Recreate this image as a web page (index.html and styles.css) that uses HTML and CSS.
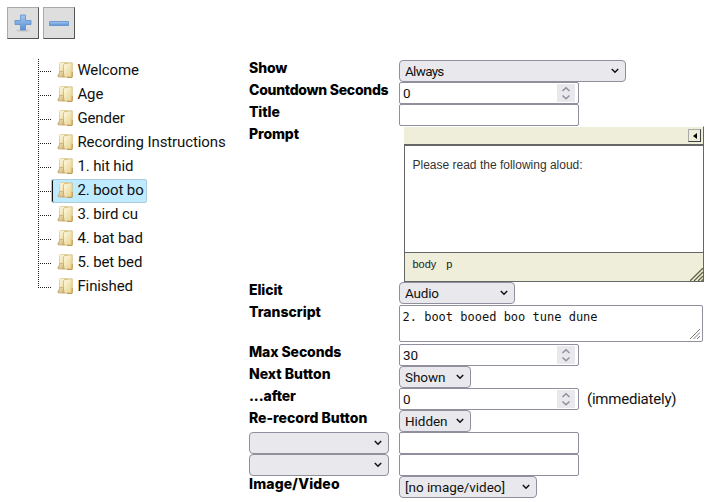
FILE: index.html
```html
<!DOCTYPE html>
<html lang="en">
<head>
<meta charset="utf-8">
<title>Task steps</title>
<link rel="stylesheet" href="styles.css">
</head>
<body>
<svg class="defs" aria-hidden="true">
  <defs>
    <linearGradient id="blue" x1="0" y1="0" x2="0" y2="1"><stop offset="0" stop-color="#a5c8ef"/><stop offset="1" stop-color="#5a90d6"/></linearGradient>
    <linearGradient id="gold" x1="0" y1="0" x2="1" y2="1"><stop offset="0" stop-color="#fffbe0"/><stop offset="1" stop-color="#e6d08c"/></linearGradient>
    <linearGradient id="tan" x1="0" y1="0" x2="1" y2="1"><stop offset="0" stop-color="#f5e8b8"/><stop offset="1" stop-color="#cfae6c"/></linearGradient>
  </defs>
  <symbol id="folder" viewBox="0 0 16 16">
    <path d="M0 14l2-3v4H1z" fill="#c6c6c6"/>
    <path d="M3.500.5h7v10h-8v-9z" fill="url(#gold)" stroke="#dcc794" stroke-width=".8"/>
    <path d="M7.500 1.500l7.700-.8v13.600l-1 .8H6.500v-12z" fill="url(#gold)" stroke="#d0b274" stroke-width=".8"/>
    <path d="M10 15.400h5.200V10" fill="none" stroke="#c09750"/>
    <path d="M2.700 9.500h3.500l1 5.500H1.600z" fill="url(#tan)" stroke="#c6a461" stroke-width=".7"/>
  </symbol>
  <symbol id="chevron" viewBox="0 0 8 6"><path d="M.8 1l3.200 3.200L7.200 1" fill="none" stroke="#111" stroke-width="1.500"/></symbol>
  <symbol id="spin" viewBox="0 0 18 18"><path d="M5.500 7L9 3.800 12.500 7M5.500 11.500L9 14.700l3.500-3.200" fill="none" stroke="#8f8f9d" stroke-width="1.500"/></symbol>
</svg>
<div class="toolbar">
  <button class="tool"><svg width="18" height="18" viewBox="0 0 18 18"><ellipse cx="9" cy="16.500" rx="7" ry="1.300" fill="#c9c9c9"/><path d="M6.500 1h5v5.500H17v4h-5.500V16h-5v-5.500H1v-4h5.500z" fill="url(#blue)" stroke="#5c8ecb" stroke-width=".8"/></svg></button>
  <button class="tool"><svg width="20" height="18" viewBox="0 0 20 18"><path d="M.5 7.500h19v4H.5z" fill="url(#blue)" stroke="#5c8ecb" stroke-width=".8"/></svg></button>
</div>
<main class="layout">
  <ul class="tree">
    <li><span class="node"><svg class="icon"><use href="#folder"/></svg><span class="name">Welcome</span></span></li>
    <li><span class="node"><svg class="icon"><use href="#folder"/></svg><span class="name">Age</span></span></li>
    <li><span class="node"><svg class="icon"><use href="#folder"/></svg><span class="name">Gender</span></span></li>
    <li><span class="node"><svg class="icon"><use href="#folder"/></svg><span class="name">Recording Instructions</span></span></li>
    <li><span class="node"><svg class="icon"><use href="#folder"/></svg><span class="name">1. hit hid</span></span></li>
    <li><span class="node selected"><svg class="icon"><use href="#folder"/></svg><span class="name">2. boot bo</span></span></li>
    <li><span class="node"><svg class="icon"><use href="#folder"/></svg><span class="name">3. bird cu</span></span></li>
    <li><span class="node"><svg class="icon"><use href="#folder"/></svg><span class="name">4. bat bad</span></span></li>
    <li><span class="node"><svg class="icon"><use href="#folder"/></svg><span class="name">5. bet bed</span></span></li>
    <li><span class="node"><svg class="icon"><use href="#folder"/></svg><span class="name">Finished</span></span></li>
  </ul>
  <div class="form">
    <div class="label">Show</div>
    <div class="select wide"><span>Always</span><svg class="chev"><use href="#chevron"/></svg></div>
    <div class="label long">Countdown Seconds</div>
    <div class="input"><span>0</span><svg class="spin"><use href="#spin"/></svg></div>
    <div class="label">Title</div>
    <div class="input"></div>
    <div class="label">Prompt</div>
    <div class="editor">
      <div class="editor-top"><span class="collapse"><svg width="4" height="6" viewBox="0 0 4 6"><path d="M4 0v6L0 3z"/></svg></span></div>
      <div class="editor-body">Please read the following aloud:</div>
      <div class="editor-path"><span>body</span><span>p</span><svg class="grip" width="13" height="13" viewBox="0 0 13 13"><path d="M0 13L13 0M4 13l9-9M8 13l5-5M11.500 13l1.500-1.500" stroke="#62623f" stroke-width="1.300"/></svg></div>
    </div>
    <div class="label">Elicit</div>
    <div class="select elicit"><span>Audio</span><svg class="chev"><use href="#chevron"/></svg></div>
    <div class="label wider">Transcript</div>
    <div class="textarea">2. boot booed boo tune dune<svg class="resize" width="10" height="10" viewBox="0 0 10 10"><path d="M0 10L10 0M3.500 10L10 3.500M7 10l3-3" stroke="#777" stroke-width="1"/></svg></div>
    <div class="label">Max Seconds</div>
    <div class="input"><span>30</span><svg class="spin"><use href="#spin"/></svg></div>
    <div class="label wider">Next Button</div>
    <div class="select small"><span>Shown</span><svg class="chev"><use href="#chevron"/></svg></div>
    <div class="label">...after</div>
    <div class="after"><div class="input"><span>0</span><svg class="spin"><use href="#spin"/></svg></div><span class="note">(immediately)</span></div>
    <div class="label wider">Re-record Button</div>
    <div class="select small"><span>Hidden</span><svg class="chev"><use href="#chevron"/></svg></div>
    <div class="select attribute"><span></span><svg class="chev"><use href="#chevron"/></svg></div>
    <div class="input"></div>
    <div class="select attribute"><span></span><svg class="chev"><use href="#chevron"/></svg></div>
    <div class="input"></div>
    <div class="label media-label">Image/Video</div>
    <div class="select media"><span>[no image/video]</span><svg class="chev"><use href="#chevron"/></svg></div>
  </div>
</main>
</body>
</html>
```
FILE: styles.css
```css
* { box-sizing: border-box; }
body { margin: 0; width: 711px; height: 502px; overflow: hidden; background: #fff; color: #111; font: 15px/22px Roboto, sans-serif; }
.defs { position: absolute; width: 0; height: 0; }
.toolbar { display: flex; gap: 4px; padding: 7px 0 0 7px; height: 58px; }
.tool { width: 32px; height: 32px; padding: 0; display: flex; align-items: center; justify-content: center; background: #dedede; border: 1px solid #aaa; border-right-color: #555; border-bottom: 1px solid #555; }
.layout { display: flex; }
.tree { list-style: none; margin: 1px 0 0 38px; padding: 0; width: 211px; height: 229px; background: repeating-linear-gradient(#222 0 1px, transparent 1px 2px) 0 0 / 1px 229px no-repeat; }
.tree li { height: 24px; display: flex; align-items: center; background: repeating-linear-gradient(90deg, #222 0 1px, transparent 1px 2px) 0 12px / 13px 1px no-repeat; }
.node { display: flex; align-items: center; height: 25px; margin: -1px 0 0 13px; padding: 0 4px 1px 5px; border: 1px solid transparent; }
.selected { background: #beebff; border-color: #a9cbda; border-radius: 2px; box-shadow: inset 1px 0 #111; padding-right: 2px; height: 24px; }
.icon { width: 16px; height: 16px; margin-right: 4.4px; }
.name { font-size: 15px; letter-spacing: -.1px; color: #111; }
.form { display: grid; grid-template-columns: 150px 312px; grid-template-rows: 22px 22px 22px 156px 22px 40px repeat(7, 22px); margin-top: 2px; }
.label { font: 800 14px/15px Inter, sans-serif; letter-spacing: -.1px; color: #000; white-space: nowrap; }
.long { letter-spacing: -.28px; }
.wider { letter-spacing: 0; }
.media-label { letter-spacing: .15px; }
.select { display: flex; align-items: center; justify-content: space-between; height: 22px; padding: 0 6px 0 5px; border: 1px solid #8f8f9d; border-radius: 4px; background: #e9e9ed; font-size: 13.5px; white-space: nowrap; }
.chev { width: 8px; height: 6px; }
.wide { width: 227px; letter-spacing: -.7px; }
.select.wide { letter-spacing: -.7px; }
.elicit { width: 116px; letter-spacing: -.2px; }
.small { width: 72px; letter-spacing: -.05px; }
.attribute { width: 140px; }
.media { width: 138px; letter-spacing: -.05px; }
.input { display: flex; align-items: center; justify-content: space-between; width: 180px; height: 22px; padding: 0 3px; border: 1px solid #8f8f9d; border-radius: 2px; background: #fff; font-size: 13.5px; }
.spin { width: 18px; height: 18px; background: #e9e9ed; }
.editor { display: flex; flex-direction: column; width: 300px; margin-left: 5px; height: 156px; font-family: "Liberation Sans", sans-serif; }
.editor-top { display: flex; align-items: center; justify-content: flex-end; height: 19px; padding-right: 2px; background: #eeeedb; border-top: 1px solid #fff; border-right: 1px solid #666; }
.collapse { width: 13px; height: 13px; margin-top: -1px; display: flex; align-items: center; justify-content: center; border: 1px solid #aaa; border-right-color: #444; border-bottom-color: #444; }
.editor-body { height: 109px; margin-top: -1px; padding: 8px 7.5px; border: 1px solid #666; border-top-width: 2px; font-size: 12px; color: #333; }
.editor-path { position: relative; flex: 1; display: flex; gap: 10px; padding: 0 7.5px; background: #eeeedb; border: 1px solid #666; border-top: 0; font-size: 11px; color: #222; }
.grip { position: absolute; right: 0; bottom: 0; }
.textarea { position: relative; width: 304px; height: 37px; margin-top: 1px; padding: 1px 3px 1px 2.5px; border: 1px solid #8f8f9d; border-radius: 2px; font: 12px/20px "DejaVu Sans Mono", monospace; color: #111; }
.resize { position: absolute; right: 2px; bottom: 2px; }
.after { display: flex; align-items: center; gap: 8px; }
.note { font-size: 15px; letter-spacing: -.22px; }
```
